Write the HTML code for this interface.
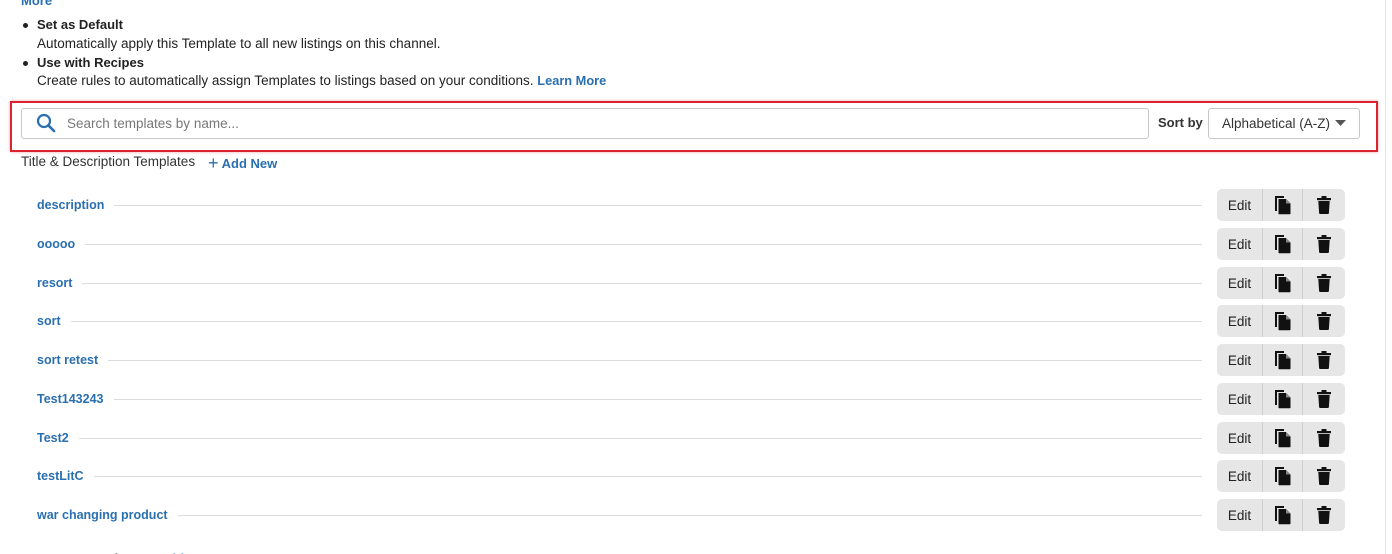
<!DOCTYPE html>
<html><head><meta charset="utf-8"><style>
*{box-sizing:border-box;margin:0;padding:0}
html,body{width:1392px;height:554px;overflow:hidden}
body{background:#fff;font-family:"Liberation Sans",sans-serif;font-size:13.5px;color:#222;position:relative}
.a{position:absolute}
.blue{color:#2a6fb0}
.vline{left:1385px;top:0;width:1px;height:554px;background:#e6e6e6}
.red{left:10px;top:101px;width:1368px;height:51px;border:2px solid #d9232e;box-shadow:0 0 3px rgba(217,35,46,.4)}
.inp{left:21px;top:108px;width:1128px;height:31px;border:1px solid #c9c9c9;border-radius:3px}
.sel{left:1208px;top:108px;width:152px;height:31px;border:1px solid #c9c9c9;border-radius:3px;font-size:13.5px;color:#333;padding:7px 0 0 13px}
.row{left:37px;height:20px;width:1165px}
.row span{position:absolute;left:0;top:2px;color:#2a6fb0;font-weight:bold;font-size:12.5px;background:#fff;padding-right:10px}
.row i{position:absolute;left:0;right:0;top:9px;height:1px;background:#dcdcdc}
.grp{left:1217px;width:128px;height:32px;background:#e6e6e6;border-radius:5px;display:flex}
.grp div{height:32px;display:flex;align-items:center;justify-content:center;border-right:1px solid #cfcfcf}
.grp div:last-child{border-right:none}
.dot{width:5px;height:5px;border-radius:50%;background:#222}
</style></head><body>
<div class="a vline"></div>
<div class="a blue" style="left:21px;top:-7px;font-weight:bold;font-size:13px">More</div>
<div class="a dot" style="left:23px;top:23px"></div>
<div class="a" style="left:37px;top:17px;font-weight:bold;font-size:13px">Set as Default</div>
<div class="a" style="left:37px;top:36px">Automatically apply this Template to all new listings on this channel.</div>
<div class="a dot" style="left:23px;top:61px"></div>
<div class="a" style="left:37px;top:55px;font-weight:bold;font-size:13px">Use with Recipes</div>
<div class="a" style="left:37px;top:73px">Create rules to automatically assign Templates to listings based on your conditions. <span class="blue" style="font-weight:bold;font-size:12.8px">Learn More</span></div>
<div class="a red"></div>
<div class="a inp"></div>
<svg class="a" style="left:35px;top:112px" width="22" height="22" viewBox="0 0 22 22"><circle cx="9" cy="9" r="6" fill="none" stroke="#2a6fb0" stroke-width="2.2"/><line x1="13.3" y1="13.3" x2="19" y2="19" stroke="#2a6fb0" stroke-width="2.6" stroke-linecap="round"/></svg>
<div class="a" style="left:67px;top:116px;color:#777">Search templates by name...</div>
<div class="a" style="left:1158px;top:115px;font-weight:bold;color:#333;font-size:13px">Sort by</div>
<div class="a sel">Alphabetical (A-Z)</div>
<svg class="a" style="left:1335px;top:119px" width="12" height="8"><path d="M0 1h11l-5.5 6z" fill="#555"/></svg>
<div class="a" style="left:21px;top:154px;color:#333">Title &amp; Description Templates</div>
<div class="a blue" style="left:208px;top:152px;font-weight:bold;font-size:13px"><span style="font-size:18px;font-weight:normal;position:relative;top:1px">+</span> Add New</div>

<div class="a row" style="top:196px"><i></i><span>description</span></div>
<div class="a row" style="top:235px"><i></i><span>ooooo</span></div>
<div class="a row" style="top:274px"><i></i><span>resort</span></div>
<div class="a row" style="top:312px"><i></i><span>sort</span></div>
<div class="a row" style="top:351px"><i></i><span>sort retest</span></div>
<div class="a row" style="top:390px"><i></i><span>Test143243</span></div>
<div class="a row" style="top:429px"><i></i><span>Test2</span></div>
<div class="a row" style="top:467px"><i></i><span>testLitC</span></div>
<div class="a row" style="top:506px"><i></i><span>war changing product</span></div>

<div id="grps"></div>
<div class="a" style="left:21px;top:551px;font-weight:bold;color:#333;font-size:13px">Category Templates <span class="blue">+ Add New</span></div>
<script>
var ys=[189,228,267,305,344,383,422,460,499],h='';
var copy='<svg width="18" height="20" viewBox="0 0 18 20"><path d="M1 1h9v2H3v13H1z" fill="#111"/><path d="M4.5 4h7.5l4.5 4.5V18.5a.8.8 0 0 1-.8.8H5.3a.8.8 0 0 1-.8-.8z" fill="#111"/><path d="M12 4v4.5h4.5z" fill="#888"/></svg>';
var trash='<svg width="14" height="18" viewBox="0 0 14 18"><rect x="0" y="2" width="14" height="2.2" fill="#111"/><rect x="4.5" y="0" width="5" height="2.5" fill="#111"/><path d="M1.3 5h11.4l-.8 12a1 1 0 0 1-1 1H3.1a1 1 0 0 1-1-1z" fill="#111"/></svg>';
ys.forEach(function(y){h+='<div class="a grp" style="top:'+y+'px"><div style="width:46px;font-size:13.5px;color:#222">Edit</div><div style="width:40px">'+copy+'</div><div style="width:42px">'+trash+'</div></div>';});
document.getElementById('grps').innerHTML=h;
</script>
</body></html>
